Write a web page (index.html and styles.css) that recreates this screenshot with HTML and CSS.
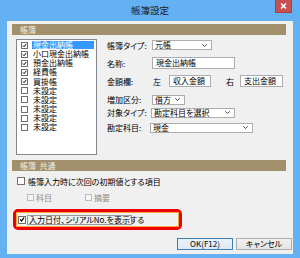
FILE: index.html
```html
<!DOCTYPE html>
<html lang="ja">
<head>
<meta charset="utf-8">
<title>帳簿設定</title>
<link rel="stylesheet" href="styles.css">
</head>
<body>
<div class="window">
  <div class="titlebar">
    <span class="title">帳簿設定</span>
    <span class="close"><svg width="7" height="6" viewBox="0 0 7 6"><path d="M1 0.5 L6 5.5 M6 0.5 L1 5.5" stroke="#fff" stroke-width="1.6"/></svg></span>
  </div>
  <div class="client">
    <div class="section-bar">帳簿</div>
    <div class="top">
      <div class="listbox">
        <div class="item"><span class="cb on"><svg viewBox="0 0 7 7"><path d="M1.2 3.4 L2.9 5.2 L5.9 1.3" fill="none" stroke="#000" stroke-width="1.4"/></svg></span><span class="lbl sel">現金出納帳</span></div>
        <div class="item"><span class="cb on"><svg viewBox="0 0 7 7"><path d="M1.2 3.4 L2.9 5.2 L5.9 1.3" fill="none" stroke="#000" stroke-width="1.4"/></svg></span><span class="lbl">小口現金出納帳</span></div>
        <div class="item"><span class="cb on"><svg viewBox="0 0 7 7"><path d="M1.2 3.4 L2.9 5.2 L5.9 1.3" fill="none" stroke="#000" stroke-width="1.4"/></svg></span><span class="lbl">預金出納帳</span></div>
        <div class="item"><span class="cb on"><svg viewBox="0 0 7 7"><path d="M1.2 3.4 L2.9 5.2 L5.9 1.3" fill="none" stroke="#000" stroke-width="1.4"/></svg></span><span class="lbl">経費帳</span></div>
        <div class="item"><span class="cb on"><svg viewBox="0 0 7 7"><path d="M1.2 3.4 L2.9 5.2 L5.9 1.3" fill="none" stroke="#000" stroke-width="1.4"/></svg></span><span class="lbl">買掛帳</span></div>
        <div class="item"><span class="cb"></span><span class="lbl">未設定</span></div>
        <div class="item"><span class="cb"></span><span class="lbl">未設定</span></div>
        <div class="item"><span class="cb"></span><span class="lbl">未設定</span></div>
        <div class="item"><span class="cb"></span><span class="lbl">未設定</span></div>
        <div class="item"><span class="cb"></span><span class="lbl">未設定</span></div>
      </div>
      <div class="form">
        <div class="row r1">
          <span class="flbl">帳簿タイプ:</span>
          <div class="select w-type">元帳<svg class="chev" width="5" height="3" viewBox="0 0 5 3"><path d="M0.3 0.3 L2.5 2.5 L4.7 0.3" fill="none" stroke="#333" stroke-width="0.9"/></svg></div>
        </div>
        <div class="row r2">
          <span class="flbl">名称:</span>
          <div class="input w-name">現金出納帳</div>
        </div>
        <div class="row r3">
          <span class="flbl">金額欄:</span>
          <span class="side left">左</span>
          <div class="input w-amt">収入金額</div>
          <span class="side right">右</span>
          <div class="input w-amt2">支出金額</div>
        </div>
        <div class="row r4">
          <span class="flbl">増加区分:</span>
          <div class="select w-inc">借方<svg class="chev" width="5" height="3" viewBox="0 0 5 3"><path d="M0.3 0.3 L2.5 2.5 L4.7 0.3" fill="none" stroke="#333" stroke-width="0.9"/></svg></div>
        </div>
        <div class="row r5">
          <span class="flbl">対象タイプ:</span>
          <div class="select w-target">勘定科目を選択<svg class="chev" width="5" height="3" viewBox="0 0 5 3"><path d="M0.3 0.3 L2.5 2.5 L4.7 0.3" fill="none" stroke="#333" stroke-width="0.9"/></svg></div>
        </div>
        <div class="row r6">
          <span class="flbl">勘定科目:</span>
          <div class="select w-acct">現金<svg class="chev" width="5" height="3" viewBox="0 0 5 3"><path d="M0.3 0.3 L2.5 2.5 L4.7 0.3" fill="none" stroke="#333" stroke-width="0.9"/></svg></div>
        </div>
      </div>
    </div>
    <div class="section-bar s2">帳簿&nbsp;&nbsp;共通</div>
    <div class="cbrow init">
      <span class="cb big"></span><span class="cbtext">帳簿入力時に次回の初期値とする項目</span>
    </div>
    <div class="cbrow sub">
      <span class="cb dis"></span><span class="cbtext dis-text">科目</span>
      <span class="cb dis second"></span><span class="cbtext dis-text">摘要</span>
    </div>
    <div class="highlight">
      <div class="hl-inner">
        <span class="cb big on"><svg viewBox="0 0 7 7"><path d="M1.2 3.4 L2.9 5.2 L5.9 1.3" fill="none" stroke="#000" stroke-width="1.4"/></svg></span>
        <span class="focus">入力日付、シリアルNo.を表示する</span>
      </div>
    </div>
    <div class="buttons">
      <div class="btn default">OK(F12)</div>
      <div class="btn">キャンセル</div>
    </div>
  </div>
</div>
</body>
</html>
```

FILE: styles.css
```css
* { box-sizing: border-box; }

body {
  margin: 0;
  font-family: "Noto Sans CJK JP", "Noto Sans", sans-serif;
  font-size: 8px;
  font-feature-settings: "palt";
  color: #000;
  background: #63b0f3;
}

.window {
  width: 300px;
  height: 258px;
  background: #63b0f3;
  display: flex;
  flex-direction: column;
}

.titlebar {
  height: 21px;
  display: grid;
  grid-template-columns: 1fr auto 1fr;
  align-items: start;
}

.title {
  grid-column: 2;
  font-size: 9.5px;
  line-height: 21px;
  color: #1a1a1a;
}

.close {
  grid-column: 3;
  justify-self: end;
  margin-right: 8px;
  width: 17px;
  height: 13px;
  background: #c75050;
  border: 1px solid #b23d3d;
  border-top: none;
  display: flex;
  align-items: center;
  justify-content: center;
}

.client {
  margin: 0 7px 4px 7px;
  height: 233px;
  background: #f0f0f0;
  display: flex;
  flex-direction: column;
}

.section-bar {
  margin: 3px 0 0 5px;
  width: 274px;
  height: 11px;
  background: #a28f6c;
  color: #f4efe4;
  line-height: 11px;
  padding-left: 8px;
}

.section-bar.s2 { margin-top: 5px; }

.top {
  margin-top: 4px;
  display: flex;
  align-items: flex-start;
}

.listbox {
  margin-left: 9px;
  width: 81px;
  height: 116px;
  background: #fff;
  border: 1px solid #828790;
  padding: 0.5px 2px 0 4px;
}

.item {
  height: 9.15px;
  display: flex;
  align-items: center;
}

.cb {
  flex: none;
  width: 7px;
  height: 7px;
  background: #fff;
  border: 1px solid #6e6e6e;
  display: flex;
  align-items: center;
  justify-content: center;
}

.cb svg { width: 7px; height: 7px; display: block; }

.cb.big { width: 8px; height: 8px; }

.cb.dis {
  border-color: #bcbcbc;
  background: #f4f4f4;
}

.lbl {
  margin-left: 4px;
  padding-left: 1px;
  line-height: 8px;
  height: 8px;
  flex: 1;
  white-space: nowrap;
}

.lbl.sel {
  background: #3399ff;
  color: #fff;
}

.form {
  margin-left: 10px;
  display: flex;
  flex-direction: column;
}

.row {
  display: flex;
  align-items: center;
}

.r1 { height: 12px; }
.r2 { height: 12px; margin-top: 6px; }
.r3 { height: 12px; margin-top: 6px; }
.r4 { height: 11px; margin-top: 7px; }
.r5 { height: 11px; margin-top: 2px; }
.r6 { height: 11px; margin-top: 4px; }

.flbl {
  width: 45px;
  flex: none;
  white-space: nowrap;
}

.r5 .flbl { width: 44px; }
.r6 .flbl { width: 43px; }

.select {
  height: 10px;
  background: #fff;
  border: 1px solid #acacac;
  display: flex;
  align-items: center;
  justify-content: space-between;
  padding: 0 4px 0 2px;
  line-height: 8px;
  white-space: nowrap;
}

.chev { display: block; flex: none; }

.input {
  height: 12px;
  background: #fff;
  border: 1px solid #abadb3;
  padding-left: 3px;
  line-height: 10px;
  white-space: nowrap;
}

.w-type { width: 60px; }
.w-name { width: 83px; }
.w-amt { width: 42px; }
.w-amt2 { width: 43px; }
.w-inc { width: 33px; }
.w-target { width: 84px; }
.w-acct { width: 103px; }

.side { flex: none; padding-left: 1px; }
.side.left { width: 17px; }
.side.right { width: 29px; padding-left: 15px; }

.cbrow {
  display: flex;
  align-items: center;
}

.cbrow.init {
  margin: 6px 0 0 10px;
  height: 8px;
}

.cbrow.init .cbtext { margin-left: 3px; }

.cbrow.sub {
  margin: 9px 0 0 20px;
  height: 7px;
}

.cbrow.sub .cbtext { margin-left: 2px; width: 49px; }

.dis-text { color: #8d8d8d; }

.highlight {
  margin: 8px 0 0 6px;
  width: 169px;
  height: 21px;
  border: 3px solid #f00000;
  border-radius: 5px;
  padding: 0;
}

.hl-inner {
  height: 100%;
  border: 1px solid #f3a640;
  display: flex;
  align-items: center;
  padding-left: 1px;
}

.focus {
  margin-left: 1px;
  height: 10px;
  width: 105px;
  border: 1px solid #9a9a9a;
  line-height: 8px;
  padding-left: 1px;
  white-space: nowrap;
}

.buttons {
  margin: 8px 1px 0 0;
  display: flex;
  justify-content: flex-end;
  gap: 3px;
}

.btn {
  width: 56px;
  height: 12px;
  border: 1px solid #acacac;
  background: linear-gradient(#f0f0f0, #e5e5e5);
  display: flex;
  align-items: center;
  justify-content: center;
  line-height: 8px;
}

.btn.default {
  border-color: #3c7fb1;
  background: linear-gradient(#eaf3fb, #dde9f5);
}
```
